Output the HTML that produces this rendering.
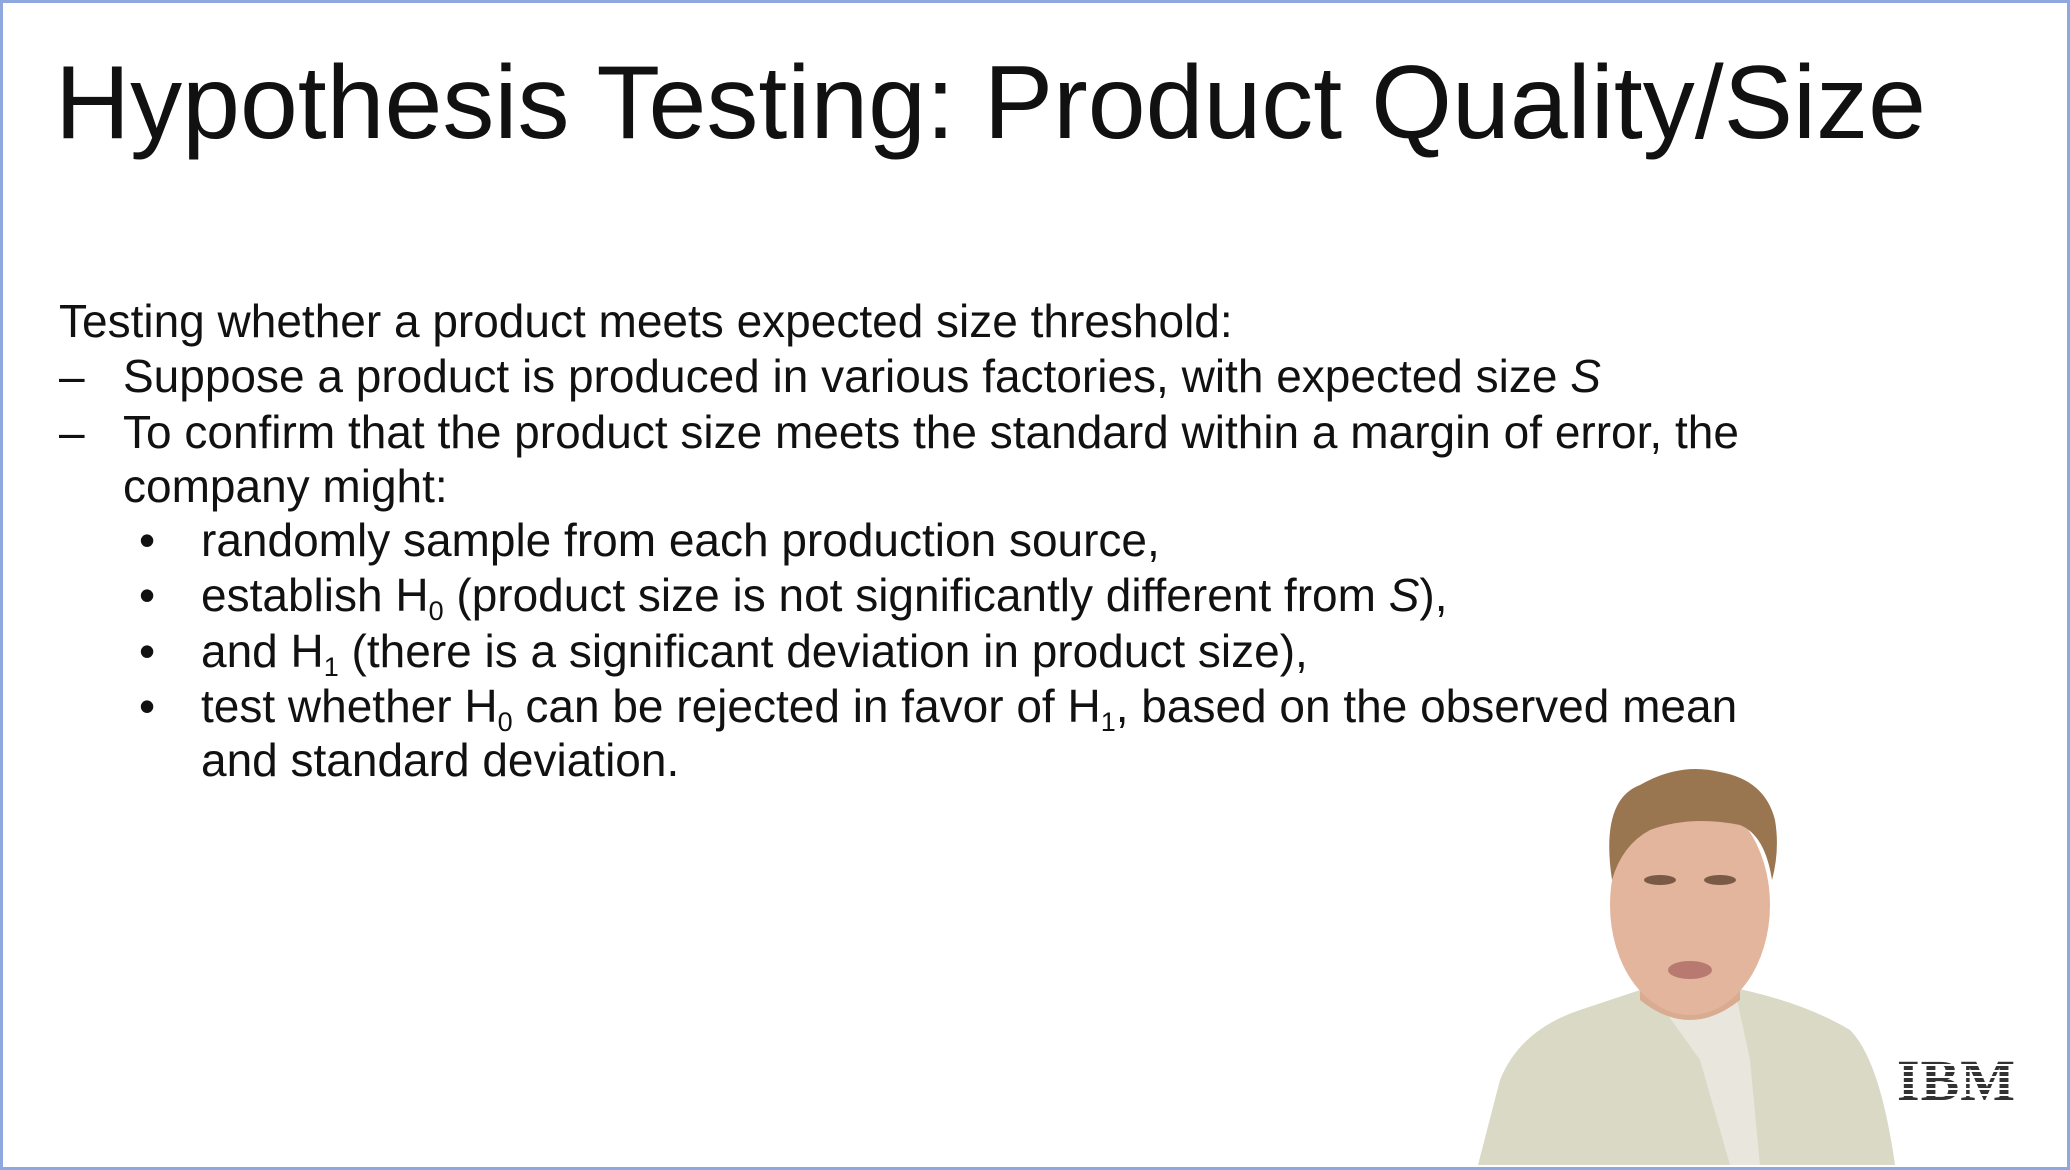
<!DOCTYPE html>
<html><head><meta charset="utf-8"><style>
html,body{margin:0;padding:0}
body{width:2070px;height:1170px;position:relative;background:#fff;overflow:hidden;font-family:"Liberation Sans",Arial,sans-serif;color:#111}
.frame{position:absolute;left:0;top:0;width:2064px;height:1164px;border:3px solid #8fa8e0}
.t{position:absolute;left:55px;top:44px;font-size:104px;white-space:nowrap;letter-spacing:0px}
.l{position:absolute;font-size:46px;white-space:nowrap;line-height:1;letter-spacing:0px}
sub{font-size:27px;vertical-align:-9px;line-height:0}
</style></head><body>
<div class="frame"></div>
<div class="t">Hypothesis Testing: Product Quality/Size</div>
<div class="l" style="left:59px;top:298px">Testing whether a product meets expected size threshold:</div>
<div class="l" style="left:59px;top:353px">–</div>
<div class="l" style="left:123px;top:353px">Suppose a product is produced in various factories, with expected size <i>S</i></div>
<div class="l" style="left:59px;top:409px">–</div>
<div class="l" style="left:123px;top:409px">To confirm that the product size meets the standard within a margin of error, the</div>
<div class="l" style="left:123px;top:463px">company might:</div>
<div class="l" style="left:139px;top:517px">•</div>
<div class="l" style="left:201px;top:517px">randomly sample from each production source,</div>
<div class="l" style="left:139px;top:572px">•</div>
<div class="l" style="left:201px;top:572px">establish H<sub>0</sub> (product size is not significantly different from <i>S</i>),</div>
<div class="l" style="left:139px;top:628px">•</div>
<div class="l" style="left:201px;top:628px">and H<sub>1</sub> (there is a significant deviation in product size),</div>
<div class="l" style="left:139px;top:683px">•</div>
<div class="l" style="left:201px;top:683px">test whether H<sub>0</sub> can be rejected in favor of H<sub>1</sub>, based on the observed mean</div>
<div class="l" style="left:201px;top:737px">and standard deviation.</div>

<svg style="position:absolute;left:0;top:0" width="2070" height="1170">
  <path d="M1478 1165 L1500 1080 Q1520 1030 1580 1010 L1640 990 L1720 985 Q1800 1000 1850 1030 Q1880 1060 1895 1165 Z" fill="#d9d9c6"/>
  <path d="M1650 990 L1700 1060 L1730 1165 L1760 1165 L1750 1060 L1735 990 Z" fill="#e9e6dd"/>
  <path d="M1640 940 L1640 1000 Q1690 1040 1740 1000 L1740 930 Z" fill="#d9ab90"/>
  <ellipse cx="1690" cy="905" rx="80" ry="110" fill="#e2b59c"/>
  <path d="M1612 880 Q1600 800 1640 785 Q1680 762 1720 772 Q1765 780 1775 820 Q1780 850 1772 880 Q1765 835 1740 825 Q1690 815 1650 830 Q1622 845 1612 880 Z" fill="#9a7650"/>
  <ellipse cx="1660" cy="880" rx="16" ry="5" fill="#7a5a44"/>
  <ellipse cx="1720" cy="880" rx="16" ry="5" fill="#7a5a44"/>
  <ellipse cx="1690" cy="970" rx="22" ry="9" fill="#b87a70"/>
</svg>
<div style="position:absolute;left:1897px;top:1052px;font-family:'Liberation Serif',serif;font-weight:bold;font-size:58px;letter-spacing:1px;color:#333;line-height:1">IBM
<div style="position:absolute;left:0;top:6px;width:125px;height:46px;background:repeating-linear-gradient(#fff 0 2px,transparent 2px 6px)"></div></div>
</body></html>
